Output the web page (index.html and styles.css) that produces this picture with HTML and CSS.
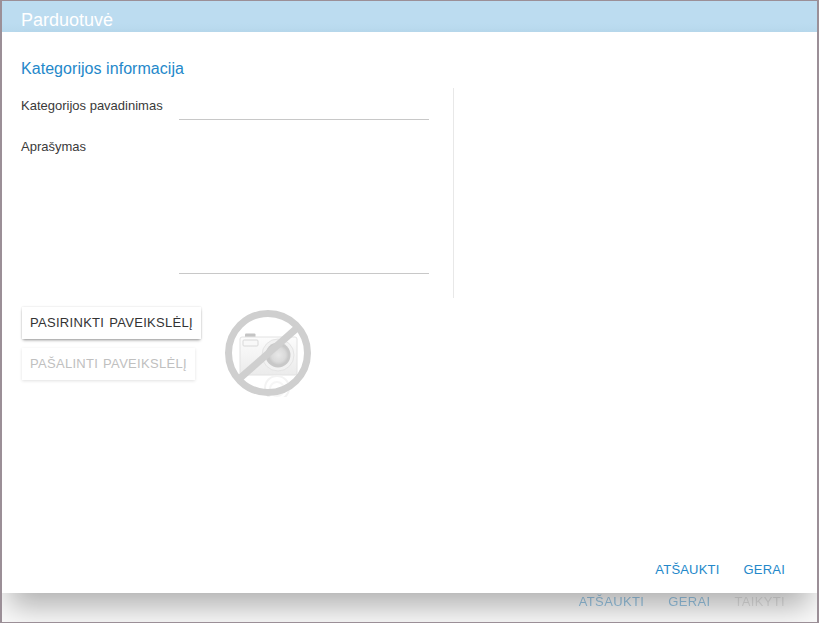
FILE: index.html
```html
<!DOCTYPE html>
<html lang="lt">
<head>
<meta charset="utf-8">
<title>Parduotuvė</title>
<link rel="stylesheet" href="styles.css">
</head>
<body>
<div class="window">
  <header class="appbar"><span class="apptitle">Parduotuvė</span></header>
  <main class="dialog">
    <div class="content">
      <h2 class="section-title">Kategorijos informacija</h2>
      <div class="columns">
        <div class="form">
          <div class="field field-name">
            <label class="label">Kategorijos pavadinimas</label>
            <div class="input input-line"></div>
          </div>
          <div class="field field-desc">
            <label class="label">Aprašymas</label>
            <div class="input input-area"></div>
          </div>
        </div>
        <div class="side"></div>
      </div>
      <div class="image-row">
        <div class="image-buttons">
          <button class="btn raised">PASIRINKTI PAVEIKSLĖLĮ</button>
          <button class="btn raised disabled">PAŠALINTI PAVEIKSLĖLĮ</button>
        </div>
        <svg class="noimage" width="88" height="88" viewBox="0 0 88 88" aria-hidden="true">
          <defs>
            <linearGradient id="body" x1="0" y1="0" x2="0" y2="1">
              <stop offset="0" stop-color="#fcfcfc"/>
              <stop offset="1" stop-color="#ebebeb"/>
            </linearGradient>
            <radialGradient id="lens" cx="0.5" cy="0.5" r="0.5">
              <stop offset="0" stop-color="#e8e8e8"/>
              <stop offset="0.7" stop-color="#dadada"/>
              <stop offset="1" stop-color="#c8c8c8"/>
            </radialGradient>
            <filter id="soft" x="-5%" y="-5%" width="110%" height="110%">
              <feGaussianBlur stdDeviation="0.6"/>
            </filter>
          </defs>
          <g filter="url(#soft)">
            <path d="M21 28v-2.500q0-1 1-1h8.500q1 0 1 1V28z" fill="#c4c4c4"/>
            <rect x="16" y="28" width="57" height="38" rx="2" fill="url(#body)" stroke="#e2e2e2"/>
            <rect x="19" y="31" width="15" height="6" rx="1" fill="#f8f8f8" stroke="#d8d8d8"/>
            <circle cx="54" cy="46" r="16" fill="#f2f2f2" stroke="#e4e4e4"/>
            <circle cx="54" cy="46" r="12.500" fill="#c8c8c8"/>
            <circle cx="54.500" cy="46" r="10" fill="url(#lens)"/>
            <circle cx="53" cy="79" r="12" fill="none" stroke="#f3f3f3" stroke-width="2"/>
            <circle cx="53" cy="80" r="7" fill="none" stroke="#f6f6f6" stroke-width="2"/>
            <circle cx="44" cy="44" r="39.500" fill="none" stroke="#cfcfcf" stroke-width="7"/>
            <path d="M15 70 73 19" stroke="#cfcfcf" stroke-width="7"/>
          </g>
        </svg>
      </div>
    </div>
    <div class="actions">
      <button class="btn flat">ATŠAUKTI</button>
      <button class="btn flat">GERAI</button>
    </div>
  </main>
  <footer class="under">
    <button class="btn under-btn">ATŠAUKTI</button>
    <button class="btn under-btn">GERAI</button>
    <button class="btn under-btn off">TAIKYTI</button>
  </footer>
</div>
</body>
</html>
```
FILE: styles.css
```css
* { box-sizing: border-box; }
html, body { margin: 0; height: 100%; }
body {
  font-family: "Liberation Sans", Arial, sans-serif;
  background: #fff;
  overflow: hidden;
}
.window {
  height: 623px;
  border: 2px solid #9b8f97;
  border-top-width: 1px;
  border-bottom-width: 1px;
  display: flex;
  flex-direction: column;
  overflow: hidden;
  background: #fafafa;
}
.appbar {
  height: 31px;
  flex: none;
  background: linear-gradient(#bcdcf0 70%, #b7d8ec);
  padding: 9px 0 0 19px;
}
.apptitle {
  display: block;
  color: #fff;
  font-size: 18px;
  line-height: 21px;
}
.dialog {
  position: relative;
  z-index: 1;
  height: 561px;
  flex: none;
  background: #fff;
  display: flex;
  flex-direction: column;
  box-shadow: 0 21px 28px -8px rgba(0, 0, 0, .3);
}
.content {
  flex: 1;
  padding: 27px 0 0 19px;
}
.section-title {
  margin: 0;
  color: #2488ca;
  font-size: 16px;
  font-weight: 400;
  line-height: 19px;
  letter-spacing: .05px;
}
.columns {
  display: flex;
  margin-top: 10px;
  height: 210px;
}
.form {
  width: 433px;
  flex: none;
  border-right: 1px solid #e8e8e8;
}
.field { display: flex; }
.label {
  width: 158px;
  flex: none;
  color: #3a3a3a;
  font-size: 13px;
  line-height: 15px;
  padding-top: 10px;
}
.input {
  width: 250px;
  border-bottom: 1px solid #c8c8c8;
}
.input-line { height: 32px; }
.field-desc { margin-top: 9px; }
.input-area { height: 145px; }
.image-row {
  display: flex;
  margin-top: 9px;
  margin-left: 1px;
}
.image-buttons {
  width: 202px;
  flex: none;
  display: flex;
  flex-direction: column;
  align-items: flex-start;
  gap: 9px;
}
.btn {
  border: 0;
  background: transparent;
  font-family: inherit;
  font-size: 13px;
  line-height: 15px;
  letter-spacing: .3px;
  word-spacing: 1px;
  padding: 0;
  white-space: nowrap;
}
.raised {
  height: 32px;
  padding: 0 8px 2px;
  color: #333;
  background: #fff;
  box-shadow: 0 2px 3px -1px rgba(0, 0, 0, .42), 0 0 2px rgba(0, 0, 0, .14);
}
.raised.disabled {
  color: #c0c0c0;
  box-shadow: 0 1px 3px rgba(0, 0, 0, .12);
}
.noimage { flex: none; margin-top: 2px; }
.actions {
  height: 48px;
  flex: none;
  display: flex;
  justify-content: flex-end;
  gap: 24px;
  padding: 8px 32px 0 0;
}
.flat {
  color: #2488ca;
  height: 32px;
  letter-spacing: .2px;
}
.under {
  flex: 1;
  display: flex;
  justify-content: flex-end;
  align-items: flex-start;
  gap: 24px;
  padding: 0 32px 0 0;
}
.under-btn {
  color: #2488ca;
  height: 17px;
  opacity: .45;
  letter-spacing: .35px;
}
.under-btn.off { color: #c4c4c4; }
```
